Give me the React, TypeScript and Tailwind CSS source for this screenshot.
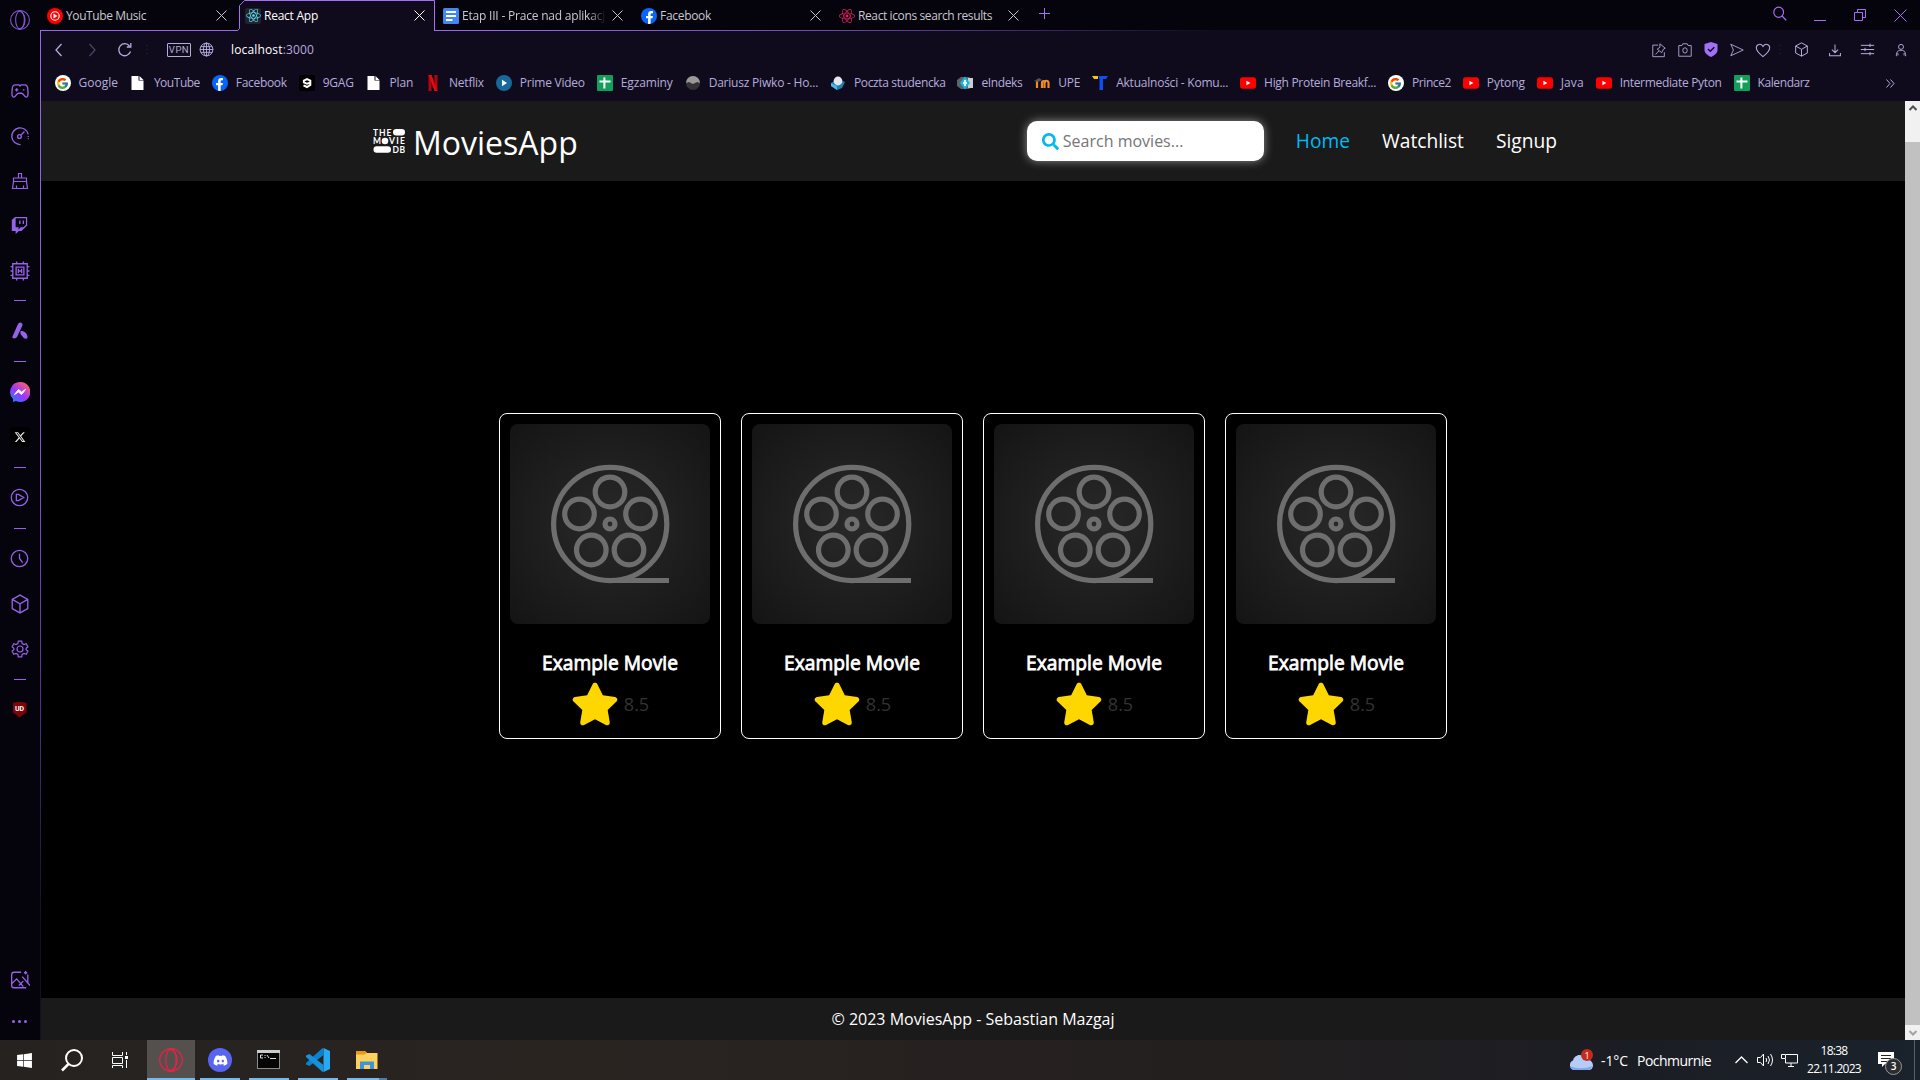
import { useLayoutEffect, useRef, useState, type ReactNode } from "react";
import { FaSearch, FaStar, FaDiscord, FaFacebookF, FaTwitch, FaReact, FaWindows } from "react-icons/fa";
import { FaXTwitter } from "react-icons/fa6";
import { FcGoogle } from "react-icons/fc";

/* Text that keeps to a given width by adjusting its letter spacing. */
function Fit({ text, w, className = "" }: { text: ReactNode; w: number; className?: string }) {
  const ref = useRef<HTMLSpanElement>(null);
  const [ls, setLs] = useState(0);
  useLayoutEffect(() => {
    const el = ref.current;
    if (!el) return;
    setLs((w - el.getBoundingClientRect().width) / (el.textContent || " ").length);
  }, [w]);
  return (
    <span className={"block shrink-0 whitespace-nowrap " + className} style={{ width: w }}>
      <span ref={ref} className="inline-block" style={{ letterSpacing: ls }}>
        {text}
      </span>
    </span>
  );
}

function Line({ d, size = 18, sw = 1, className = "", children }: { d?: string; size?: number; sw?: number; className?: string; children?: ReactNode }) {
  return (
    <svg width={size} height={size} viewBox="0 0 18 18" fill="none" stroke="currentColor" strokeWidth={sw} className={"shrink-0 " + className}>
      {d && <path d={d} />}
      {children}
    </svg>
  );
}

const cubeD = "M9 1 16 4.8V13.2L9 17 2 13.2V4.8ZM2 4.8 9 8.8 16 4.8M9 8.8V17";

/* ---------- favicons ---------- */
function YtRed() {
  return (
    <svg width="16" height="16" viewBox="0 0 16 16">
      <rect y="2.3" width="16" height="11.4" rx="2.6" fill="#f00" />
      <path d="M6.4 5.7v4.6L10.4 8z" fill="#fff" />
    </svg>
  );
}
function FileIcon() {
  return (
    <svg width="16" height="16" viewBox="0 0 16 16">
      <path d="M1.5 1h7v4.5h5V15h-12zM9.5 1l4 4h-4z" fill="#fff" />
    </svg>
  );
}
function Sheet() {
  return (
    <svg width="16" height="16" viewBox="0 0 16 16">
      <rect width="16" height="16" rx="1" fill="#129e5b" />
      <path d="M7.4 2.5v11M2.5 6.5h11" stroke="#fff" strokeWidth="2" />
    </svg>
  );
}
function Fb() {
  return (
    <span className="flex size-4 items-end justify-center overflow-hidden rounded-full bg-[#0866ff] text-[13px] text-white">
      <FaFacebookF />
    </span>
  );
}
function GoogleIcon() {
  return (
    <span className="flex size-4 items-center justify-center rounded-full bg-white text-[13px]">
      <FcGoogle />
    </span>
  );
}
const icons: Record<string, ReactNode> = {
  google: <GoogleIcon />,
  file: <FileIcon />,
  fb: <Fb />,
  yt: <YtRed />,
  sheet: <Sheet />,
  gag: (
    <svg width="16" height="16" viewBox="0 0 16 16">
      <rect width="16" height="16" rx="1" fill="#000" />
      <path d="M4.500 10.300 8 12l3.300-2V5.600L8 4 4.900 5.600v1.800L8 8.800l3-1" stroke="#fff" strokeWidth="2" fill="none" />
    </svg>
  ),
  netflix: (
    <svg width="16" height="16" viewBox="0 0 16 16">
      <path d="M3.5 0h3v16l-3 .3zM9.5 0h3v16h-3z" fill="#b1060f" />
      <path d="M3.5 0h3l6 16.2-3-.2z" fill="#e50914" />
    </svg>
  ),
  prime: (
    <svg width="16" height="16" viewBox="0 0 16 16">
      <circle cx="8" cy="8" r="8" fill="#17699c" />
      <path d="M6 4.8v6.4L11 8z" fill="#fff" />
    </svg>
  ),
  ball: (
    <svg width="16" height="16" viewBox="0 0 16 16">
      <circle cx="8" cy="8" r="7" fill="#333" />
      <path d="M1 8a7 7 0 0 1 14 0l-3-1-4 2-4-2z" fill="#999" />
    </svg>
  ),
  poczta: (
    <svg width="16" height="16" viewBox="0 0 16 16">
      <path d="M1 8l7-4 7 3-3 6-5 2-6-4z" fill="#1c7fb6" />
      <path d="M1 8l6 3v4l-6-4z" fill="#50b5e2" />
      <circle cx="8" cy="6" r="4.4" fill="#e4e8ec" />
    </svg>
  ),
  eindeks: (
    <svg width="16" height="16" viewBox="0 0 16 16">
      <path d="M4 2h8l4 3v6l-4 3H4l-4-3V5z" fill="#59646b" />
      <path d="M11 3h5v10h-5z" fill="#c9ced1" />
      <path d="M8 1.500 13 8l-5 6.500L3 8z" fill="#17b9dd" />
      <path d="M8 5v6M6 8h4" stroke="#e6f7fb" strokeWidth="2" />
    </svg>
  ),
  moodle: (
    <svg width="16" height="16" viewBox="0 0 16 16">
      <path d="M0 6l5-3 3 2-4 2z" fill="#55524f" />
      <path d="M3 13V6.5M8 13V8c0-2.500 3-2.500 3 0M14.500 13V8c0-3-4-3-4 0v5" stroke="#f08a24" strokeWidth="2.200" fill="none" />
    </svg>
  ),
  tee: (
    <svg width="16" height="16" viewBox="0 0 16 16">
      <path d="M0 1h6v3H2z" fill="#ffc20e" />
      <path d="M6.500 1H16l-2 3h-3v11H7.500V4.500z" fill="#0f4ff0" />
    </svg>
  ),
  docs: (
    <svg width="16" height="16" viewBox="0 0 16 16">
      <rect width="16" height="16" rx="1.500" fill="#4285f4" />
      <path d="M3 4h10M3 8h10M3 12h6.500" stroke="#fff" strokeWidth="1.900" />
    </svg>
  ),
  ytm: (
    <svg width="16" height="16" viewBox="0 0 16 16">
      <circle cx="8" cy="8" r="8" fill="#f00" />
      <circle cx="8" cy="8" r="4.200" fill="none" stroke="#fff" strokeWidth="1.100" />
      <path d="M6.500 5.500v5L10.500 8z" fill="#fff" />
    </svg>
  ),
  react: (
    <span className="flex size-4 items-center justify-center rounded-[2px] bg-[#20232a] text-[15px] text-[#61dafb]">
      <FaReact />
    </span>
  ),
  reactPink: (
    <span className="flex size-4 items-center justify-center text-[16px] text-[#e91e63]">
      <FaReact />
    </span>
  ),
};

const tabs = [
  { icon: "ytm", text: "YouTube Music", w: 80 },
  { icon: "react", text: "React App", w: 54, active: true },
  { icon: "docs", text: "Etap III - Prace nad aplikacj", w: 143, cut: true },
  { icon: "fb", text: "Facebook", w: 51 },
  { icon: "reactPink", text: "React icons search results", w: 134 },
];

const bookmarks: [string, string, number][] = [
  ["google", "Google", 39.5],
  ["file", "YouTube", 46],
  ["fb", "Facebook", 51],
  ["gag", "9GAG", 31],
  ["file", "Plan", 23.5],
  ["netflix", "Netflix", 35],
  ["prime", "Prime Video", 65],
  ["sheet", "Egzaminy", 52],
  ["ball", "Dariusz Piwko - Ho...", 109.5],
  ["poczta", "Poczta studencka", 91.5],
  ["eindeks", "eIndeks", 41],
  ["moodle", "UPE", 22],
  ["tee", "Aktualności - Komu...", 112],
  ["yt", "High Protein Breakf...", 112],
  ["google", "Prince2", 39],
  ["yt", "Pytong", 38],
  ["yt", "Java", 23],
  ["yt", "Intermediate Pyton", 102],
  ["sheet", "Kalendarz", 52],
];

function TabBar() {
  return (
    <div className="relative flex h-[31px] shrink-0 bg-[#05040c]">
      <div className="absolute inset-x-0 bottom-0 h-px bg-[linear-gradient(90deg,#9a68ee_0px,#9a68ee_440px,#6f4bb0_780px,#0f0b1c_1180px)]" />
      {tabs.map((t) => (
        <div
          key={t.text}
          className={
            "relative flex w-[198px] shrink-0 items-center pl-[6px] text-[12px] " +
            (t.active ? "z-10 text-white" : "text-[#c9c7cf]")
          }
        >
          {t.active && (
            <svg className="absolute left-[-3px] top-0" width="200" height="31" fill="#0f0b1c" stroke="#a36ff7">
              <path d="M-1 30.500 3.500 29.500V6.500L8.500.5H198.500V31H3.500" stroke="none" />
              <path d="M0 30.500H1.500L3.500 28.500V5.500L8.500.5H198.500V31" />
            </svg>
          )}
          <span className="relative flex size-4">{icons[t.icon]}</span>
          <span className={"relative ml-[3px] w-[144px] " + (t.cut ? "[mask-image:linear-gradient(90deg,#000_88%,transparent)]" : "")}>
            <Fit text={t.text} w={t.w} />
          </span>
          <svg width="11" height="11" viewBox="0 0 11 11" className="relative ml-[6px]" stroke="currentColor">
            <path d="m.5.5 10 10m0-10-10 10" />
          </svg>
        </div>
      ))}
      <svg width="11" height="11" viewBox="0 0 11 11" className="mt-[8px] ml-[8px]" stroke="#a36ff7">
        <path d="M5.500 0v11M0 5.500h11" />
      </svg>
      <div className="ml-auto flex text-[#a36ff7]">
        <div className="flex w-10 justify-center pt-[6px]">
          <Line d="m11 11 5 5" sw={1.300} size={16}><ellipse cx="7.500" cy="7" rx="5.500" ry="5.800" /></Line>
        </div>
        <div className="flex w-10 justify-center pt-[20px]"><div className="h-px w-3 bg-[#a36ff7]" /></div>
        <div className="flex w-10 justify-center pt-[9px]">
          <svg width="12" height="12" fill="none" stroke="currentColor"><path d="M.5 3.500h8v8h-8zM3.500 3.500v-3h8v8h-3" /></svg>
        </div>
        <div className="flex w-10 justify-center pt-[9px]">
          <svg width="13" height="13" fill="none" stroke="currentColor"><path d="m.5.5 12 12m0-12-12 12" /></svg>
        </div>
      </div>
    </div>
  );
}

function AddressBar() {
  const cell = "flex shrink-0 items-center justify-center";
  return (
    <div className="flex h-[37px] shrink-0 items-center pl-[1px] text-[#b6abdc]">
      <div className={cell + " w-[33px]"}><Line d="M11.500 3 6 9l5.500 6" sw={1.300} /></div>
      <div className={cell + " w-[33px] text-[#4a4363]"}><Line d="M6.500 3 12 9l-5.500 6" sw={1.300} /></div>
      <div className={cell + " w-[33px]"}><Line d="M14.500 10.500A6 6 0 1 1 13.500 5M14.800 2v4h-4" sw={1.300} /></div>
      <div className={cell + " w-[12px] text-[#2e2747]"}><Line d="M9 4v10" sw={1} className="[stroke-dasharray:1_3]" /></div>
      <div className="ml-[14px] flex h-[14px] w-6 shrink-0 items-center justify-center rounded-[1px] border border-[#b6abdc] font-[Roboto] text-[9.500px] leading-none tracking-[0.500px]">VPN</div>
      <div className={cell + " ml-[7px] w-4"}>
        <Line size={17}><circle cx="9" cy="9" r="6.800" /><ellipse cx="9" cy="9" rx="3.200" ry="6.800" /><path d="M9 2v14M3 6h12M2 9h14M3 12h12" /></Line>
      </div>
      <div className="ml-[17px] pt-px text-[12px]">
        <Fit w={83} text={<><span className="text-white">localhost</span>:3000</>} />
      </div>
      <div className="ml-auto flex h-full items-center pr-[7px]">
        <div className={cell + " w-[26px]"}><Line size={16} d="M8 3.500H2v13h13v-5M10 2l6 5-2 1-2 4-5-4 3-2zM9 10l-4 4" /></div>
        <div className={cell + " w-[26px]"}><Line size={16} d="M2 4h3.500l1-2h5l1 2H16v12H2z"><ellipse cx="9" cy="9.500" rx="2.500" ry="3" /></Line></div>
        <div className={cell + " w-[26px]"}>
          <svg width="14" height="15" viewBox="0 0 14 15"><path d="M7 0 13.500 2v6c0 3.500-3.500 5.500-6.500 7C4 13.500.5 11.500.5 8V2z" fill="#a36ff7" /><path d="m4 7 2.300 2.300L10.300 5.300" fill="none" stroke="#0f0b1c" strokeWidth="1.500" /></svg>
        </div>
        <div className={cell + " w-[26px]"}><Line size={16} d="M2 2.500 16 9 2 15.500 5 9z" /></div>
        <div className={cell + " w-[25px]"}><Line size={16} d="M9 16.500C4 12.500 1.500 10 1.500 6.500 1.500 2.500 6.500 1 9 5c2.500-4 7.500-2.500 7.500 1.500 0 3.500-2.500 6-7.500 10z" sw={1.200} /></div>
        <div className={cell + " w-[10px] text-[#2e2747]"}><Line d="M9 4v10" className="[stroke-dasharray:1_3]" /></div>
        <div className={cell + " w-[33px]"}><Line size={15} d={cubeD} sw={1.200} /></div>
        <div className={cell + " w-[33px]"}><Line size={14} d="M9 2v10M5 8.500l4 4 4-4M2 13v3.500h14V13" sw={1.300} /></div>
        <div className={cell + " w-[33px]"}><Line size={15} d="M1 4h16M1 9h16M1 14h16M12 2v4M6 7v4M12 12v4" sw={1.200} /></div>
        <div className={cell + " w-[33px] -mr-[4px]"}><Line size={14} d="M3 17c0-7 3-7.500 6-7.500s6 .5 6 7.500M5 13v3M13 13v3" sw={1.200}><circle cx="9" cy="5" r="3.200" /></Line></div>
      </div>
    </div>
  );
}

function Bookmarks() {
  return (
    <div className="flex h-[33px] shrink-0 items-center pb-[3px] pl-[13.500px] text-[12px] text-[#b6abdc]">
      {bookmarks.map(([icon, text, w], i) => (
        <div key={i} className="mr-[11.900px] flex shrink-0 items-center gap-[8px]">
          <span className="flex size-4 shrink-0 items-center">{icons[icon]}</span>
          <Fit text={text} w={w} />
        </div>
      ))}
      <svg width="9" height="9" className="mr-[25px] ml-auto" fill="none" stroke="currentColor"><path d="m.5.500 3.500 4-3.500 4M4.500.500l3.500 4-3.500 4" /></svg>
    </div>
  );
}

const side: (ReactNode | "-")[] = [
  <Line sw={1.200} size={20} d="M5 3.500h3l1 1h0l1-1h3c2 0 3 1 3 4 .7 5 0 7-1.500 7S12 11 10.500 11h-3C6 11 5 14.500 3.500 14.500S1.300 12.500 2 7.500c0-3 1-4 3-4zM4.500 8h3M6 6.500v3M11.500 8h1.500" />,
  <Line sw={1.200} size={20}><path d="M9.500 16.700A7.500 7.500 0 1 1 16.400 7.500" /><path d="M16.500 9v4" strokeDasharray="1 1" /><circle cx="8.500" cy="9.500" r="1.700" /><path d="m10 8 3-3" /></Line>,
  <Line sw={1.200} size={18} d="M1.500 16.500 2.500 9.500h13l1 7zM2.500 9.500V6h13v3.500M7.500 6V1.500h3V6M5.500 16V13.500M12.500 16V13.500" />,
  <FaTwitch className="text-[17px]" />,
  <Line sw={1.200} size={20}><path d="M2.500 2.500h13v13h-13zM5.500 5.500h7v7h-7zM7.500 7v4M10.500 7v4M7.500 9h3M6 2.500v-2M12 2.500v-2M6 15.500v2M12 15.500v2M.5 5h2M.5 9h2M.5 13h2M15.500 5h2M15.500 9h2M15.500 13h2" /></Line>,
  "-",
  <svg width="18" height="18" viewBox="0 0 18 18" fill="currentColor"><path d="M9 .5c2 0 3 1.500 2.300 3.300L6 15c-1 2-5.500 2-4.500-.5L7 2Q7.800.5 9 .5zM9.500 9c4-.5 6.500 2.500 7 5.500.3 2.500-2.500 3-4 1.300L9.500 12z" /></svg>,
  "-",
  <svg width="20" height="20" viewBox="0 0 20 20">
    <defs><linearGradient id="ms" x1="0" y1="1" x2=".8" y2="0"><stop offset="0" stopColor="#0a8dff" /><stop offset=".5" stopColor="#a033ff" /><stop offset="1" stopColor="#ff6560" /></linearGradient></defs>
    <path d="M10 0a10 10 0 1 1-4 19l-3 1v-3A10 10 0 0 1 10 0z" fill="url(#ms)" /><path d="m4.500 12.500 4-5 3 2.500 4-2.500-4 5-3-2.500z" fill="#fff" stroke="#fff" strokeLinejoin="round" />
  </svg>,
  <span className="flex size-5 items-center justify-center rounded-[4px] bg-black text-[12px] text-[#e8e8e8]"><FaXTwitter /></span>,
  "-",
  <Line sw={1.200} size={19}><circle cx="9" cy="9" r="7.800" /><path d="M6 6h2l5 3-5 3H6z" /></Line>,
  "-",
  <Line sw={1.200} size={19}><circle cx="9" cy="9" r="7.800" /><path d="M9 4.500V9l3 4" /></Line>,
  <Line sw={1.200} size={20} d={cubeD} />,
  <Line sw={1.200} size={18}><circle cx="9" cy="9" r="3" /><path d="M7.300 1.200h3.400l.4 2.300 1.900 1.100 2.200-.8 1.700 3-1.800 1.500v1.400l1.800 1.500-1.700 3-2.200-.8-1.900 1.100-.4 2.300H7.300l-.4-2.300L5 13.400l-2.200.8-1.700-3 1.800-1.500V8.300L1.100 6.800l1.700-3 2.200.8 1.900-1.100z" /></Line>,
  "-",
  <span className="flex h-4 w-[14px] items-center justify-center bg-[#7c0508] font-[Roboto] text-[7px] font-bold text-white [clip-path:polygon(0_10%,50%_0,100%_10%,100%_65%,50%_100%,0_65%)]">UD</span>,
];

function OperaO({ c, size, sw = 1 }: { c: string; size: number; sw?: number }) {
  return (
    <svg width={size} height={size} viewBox="0 0 24 24" fill="none" stroke={c} strokeWidth={sw}>
      <circle cx="12" cy="12" r="11.300" /><ellipse cx="12" cy="12" rx="5.200" ry="10.800" /><path d="M10 1c5 1 8 5 8 11s-3 10-8 11" />
    </svg>
  );
}

function Sidebar() {
  return (
    <aside className="flex w-10 shrink-0 flex-col items-center bg-[#05040c] pr-px text-[#9762ea]">
      <div className="flex h-[68px] w-full justify-center pt-[10px]"><OperaO c="#8456d0" size={20} sw={1.300} /></div>
      {side.map((s, i) =>
        s === "-" ? (
          <div key={i} className={"flex items-center " + (i === 5 ? "h-[15px]" : "h-4")}><div className="h-px w-3 bg-[#9762ea]" /></div>
        ) : (
          <div key={i} className="flex h-[45px] items-center justify-center">{s}</div>
        ),
      )}
      <div className="mt-auto flex h-[45px] items-center">
        <Line sw={1.200} size={20} d="M10 2H3.500Q1.500 2 1.500 4v10q0 2 2 2h11M16 6v6M2 12l4-4 6 7M8 14l4-4M11 6l7 8M14 1v3M12.500 2.500h3M16 4v2" />
      </div>
      <div className="flex h-[38px] items-center gap-[3px] pt-px">
        <i className="size-[3px] rounded-full bg-[#9762ea]" /><i className="size-[3px] rounded-full bg-[#9762ea]" /><i className="size-[3px] rounded-full bg-[#9762ea]" />
      </div>
    </aside>
  );
}

function Logo() {
  return (
    <svg width="32" height="24" viewBox="0 0 32 24" fill="#fff" fontFamily="Lato" fontWeight="700" fontSize="8.500">
      <text x="0" y="6.500" textLength="18.500">THE</text>
      <rect x="20" y="0" width="12" height="6.600" rx="3.300" />
      <text x="0" y="15" textLength="8" lengthAdjust="spacingAndGlyphs">M</text>
      <circle cx="12" cy="12" r="3.300" />
      <text x="16" y="15" textLength="16">VIE</text>
      <rect x="0.500" y="17.300" width="17.500" height="6.400" rx="3.200" />
      <text x="19.500" y="23.500" textLength="12.500">DB</text>
    </svg>
  );
}

function Reel() {
  const holes = [[100, 68], [69.5, 90], [130.5, 90], [81.3, 126], [119, 126]];
  return (
    <svg viewBox="0 0 200 200" className="size-[200px] rounded-lg bg-[radial-gradient(circle,#292929_0%,#141414_100%)]" fill="none" stroke="#6e6e6e" strokeWidth="5.200">
      <circle cx="100.200" cy="100" r="56.600" />
      {holes.map(([x, y]) => <circle key={x} cx={x} cy={y} r="14.800" />)}
      <circle cx="100" cy="100" r="5" />
      <path d="M100 156.500h59" />
    </svg>
  );
}

function MoviePage() {
  return (
    <div className="flex min-w-0 flex-1 flex-col bg-black font-['Open_Sans',sans-serif] text-white">
      <header className="flex h-20 shrink-0 justify-center bg-[#1a1a1a]">
        <div className="flex w-[1200px] items-center">
          <Logo />
          <div className="ml-[8px] pt-[3px] text-[32px] leading-[40px]">MoviesApp</div>
          <div className="ml-auto mr-4 flex h-10 w-[237px] items-center rounded-[10px] bg-white pl-[15px] shadow-[0_0_10px_rgba(255,255,255,0.5)]">
            <FaSearch className="text-[17px] text-[#00b9f1]" />
            <span className="ml-1 text-[16px] text-[#757575]">Search movies...</span>
          </div>
          <nav className="flex text-[19.200px]">
            <a className="px-4 text-[#00b9f1]">Home</a>
            <a className="px-4">Watchlist</a>
            <a className="px-4">Signup</a>
          </nav>
        </div>
      </header>
      <main className="flex flex-1 items-center justify-center gap-5 pb-[28px]">
        {[0, 1, 2, 3].map((i) => (
          <article key={i} className="flex h-[326px] w-[222px] flex-col items-center rounded-[8px] border border-white p-[10px]">
            <Reel />
            <h2 className="mt-[25px] h-[31px] text-[19.200px] leading-[28px] [-webkit-text-stroke:0.800px_white]"><Fit text="Example Movie" w={136} /></h2>
            <div className="flex items-center gap-[5px]">
              <FaStar className="size-12 text-[#ffd700]" />
              <span className="text-[18px] leading-[40px] text-[#333]">8.5</span>
            </div>
          </article>
        ))}
      </main>
      <footer className="flex h-[42px] shrink-0 items-center justify-center bg-[#1a1a1a] text-[16px]">© 2023 MoviesApp - Sebastian Mazgaj</footer>
    </div>
  );
}

function Scrollbar() {
  return (
    <div className="flex w-[15px] shrink-0 flex-col bg-[#f1f1f1]">
      <div className="flex h-[41px] justify-center pt-[4px]"><svg width="8" height="6" fill="none" stroke="#505050" strokeWidth="2"><path d="m.5 5L4 1.500 7.500 5" /></svg></div>
      <div className="flex-1 bg-[#c1c1c1]" />
      <div className="flex h-[15px] items-center justify-center"><svg width="8" height="6" fill="none" stroke="#a3a3a3" strokeWidth="2"><path d="m.5 1L4 4.500 7.500 1" /></svg></div>
    </div>
  );
}

function TaskApp({ children, w }: { children: ReactNode; w: string }) {
  return (
    <div className={"flex shrink-0 flex-col items-center justify-between " + w}>
      <div className="flex h-[38px] items-center pt-[2px]">{children}</div>
      <div className="h-[2px] w-full bg-[#76b9ed]" />
    </div>
  );
}

function Taskbar() {
  return (
    <footer className="flex h-10 shrink-0 bg-[linear-gradient(90deg,#25221f_0%,#2a2421_30%,#231f1f_65%,#1b1d24_85%,#1a222b_100%)] text-white">
      <div className="flex w-12 items-center justify-center"><FaWindows className="text-[17px]" /></div>
      <div className="flex w-12 items-center justify-center">
        <svg width="22" height="23" fill="none" stroke="#fff" strokeWidth="2"><circle cx="13" cy="9" r="8" /><path d="m7.500 15-6.500 6.500" strokeWidth="2.500" /></svg>
      </div>
      <div className="flex w-[51px] items-center justify-center pr-[3px]">
        <svg width="17" height="16" fill="none" stroke="#fff"><path d="M.5 0v3.500h10V0M.5 5.500h10v6H.5zM.5 16v-2.500h10V16M14.500 0v3M14.500 8v8" /><path d="M13 4h3v3h-3z" fill="#fff" stroke="none" /></svg>
      </div>
      <div className="flex bg-[#54504d]"><TaskApp w="w-12"><OperaO c="#ec2045" size={24} sw={1.200} /></TaskApp></div>
      <div className="ml-[5px] flex gap-[9px]">
        <TaskApp w="w-10"><span className="flex size-6 items-center justify-center rounded-full bg-[#5865f2] text-[15px]"><FaDiscord /></span></TaskApp>
        <TaskApp w="w-10">
          <svg width="23" height="19" className="mr-[2px] -mt-px"><rect width="23" height="19" fill="#8b8b8b" /><rect width="23" height="3" fill="#ccc" /><rect x="1" y="3" width="21" height="15" fill="#050505" /><path d="M6 5H3.500v3H6M8 5v1M8 7v1M10 5l2 3M13 8.500h6" stroke="#ddd" fill="none" /></svg>
        </TaskApp>
        <TaskApp w="w-10">
          <svg width="24" height="24" viewBox="0 0 24 24"><path d="M17.500 0 24 3v18l-6.500 3z" fill="#29a9f2" /><path d="M17.500 0v7L3.500 18 0 16.500v-1.500L16 .5z" fill="#0d82cc" /><path d="M17.500 24v-7L3.500 6 0 7.500V9l16 14.500z" fill="#1691dc" /></svg>
        </TaskApp>
        <div className="flex w-10 flex-col items-center justify-between">
          <div className="flex h-[38px] items-center pt-[2px]">
            <svg width="22" height="18"><path d="M0 0h9l2 2h10.500v16H0z" fill="#ffd15c" /><path d="M0 0h9l1.500 2-1.500 1.500H0z" fill="#e59a13" /><path d="M4 18v-7.500h14V18h-4v-4H8v4z" fill="#3a96dc" /></svg>
          </div>
          <div className="flex h-[2px] w-full bg-[#4f7ea4]"><div className="w-8 bg-[#76b9ed]" /></div>
        </div>
      </div>
      <div className="ml-auto flex items-center">
        <div className="relative h-5 w-6">
          <svg width="24" height="20"><path d="M5 20a5 5 0 0 1-1-9.500C5 5 13 2 17 9c4 0 7 3 7 6.500 0 2.500-2 4.500-4 4.500z" fill="#b5cdf6" /><path d="M1 16c6 3 16 3 22 0-.5 2.500-2 4-4 4H5c-2 0-3.500-1.500-4-4z" fill="#7fa7ea" /></svg>
          <span className="absolute left-3 -top-px flex size-3 items-center justify-center rounded-full bg-[#c42b1c] text-[9px] leading-none">1</span>
        </div>
        <Fit text="-1°C" w={27} className="ml-[8px] text-[14px]" />
        <Fit text="Pochmurnie" w={74} className="ml-[9px] text-[14px]" />
        <svg width="13" height="8" className="ml-[24px]" fill="none" stroke="#fff" strokeWidth="1.300"><path d="M.5 7 6.500 1l6 6" /></svg>
        <svg width="17" height="14" className="ml-[9px]" fill="none" stroke="#fff"><path d="M.5 4.500h3l3-3.500v12l-3-3.500h-3zM9 5q1.500 2 0 4M11 3q3 4 0 8M13.500 1q4 6 0 12" /></svg>
        <svg width="17" height="15" className="ml-[7px]" fill="none" stroke="#fff"><path d="M5 1.500h11.500v8.500H4.500V6M.5 1.500h4v4h-4zM7 13.500h6M10 10v3" /></svg>
        <div className="ml-[8px] flex w-[56px] flex-col items-center pb-px text-[12px] leading-[18px]">
          <Fit text="18:38" w={27} />
          <Fit text="22.11.2023" w={54} />
        </div>
        <div className="relative ml-[16px] h-4 w-4">
          <svg width="16" height="16"><path d="M0 0h16v12H7l-3 3v-3H0z" fill="#fff" /><path d="M3 3.500h10M3 6.500h10M3 9.500h6" stroke="#222" /></svg>
          <span className="absolute left-[7px] top-[6px] flex size-[17px] items-center justify-center rounded-full border border-[#999] bg-[#2b2d31] text-[10px] font-semibold">3</span>
        </div>
        <div className="ml-[20px] mr-[5px] h-10 w-px bg-[#5a5f66]" />
      </div>
    </footer>
  );
}

export default function App() {
  return (
    <div className="flex h-[1080px] w-[1920px] flex-col overflow-hidden bg-[#05040c] font-['Open_Sans','Noto_Sans',sans-serif]">
      <div className="flex min-h-0 flex-1">
        <Sidebar />
        <div className="flex w-px shrink-0 flex-col pt-[30px]"><div className="flex-1 bg-[linear-gradient(180deg,#9a68ee_0%,#7d54c5_45%,#4a3280_68%,#140f26_88%)]" /></div>
        <div className="flex min-w-0 flex-1 flex-col bg-[#0f0b1c]">
          <TabBar />
          <AddressBar />
          <Bookmarks />
          <div className="flex min-h-0 flex-1">
            <MoviePage />
            <Scrollbar />
          </div>
        </div>
      </div>
      <Taskbar />
    </div>
  );
}
